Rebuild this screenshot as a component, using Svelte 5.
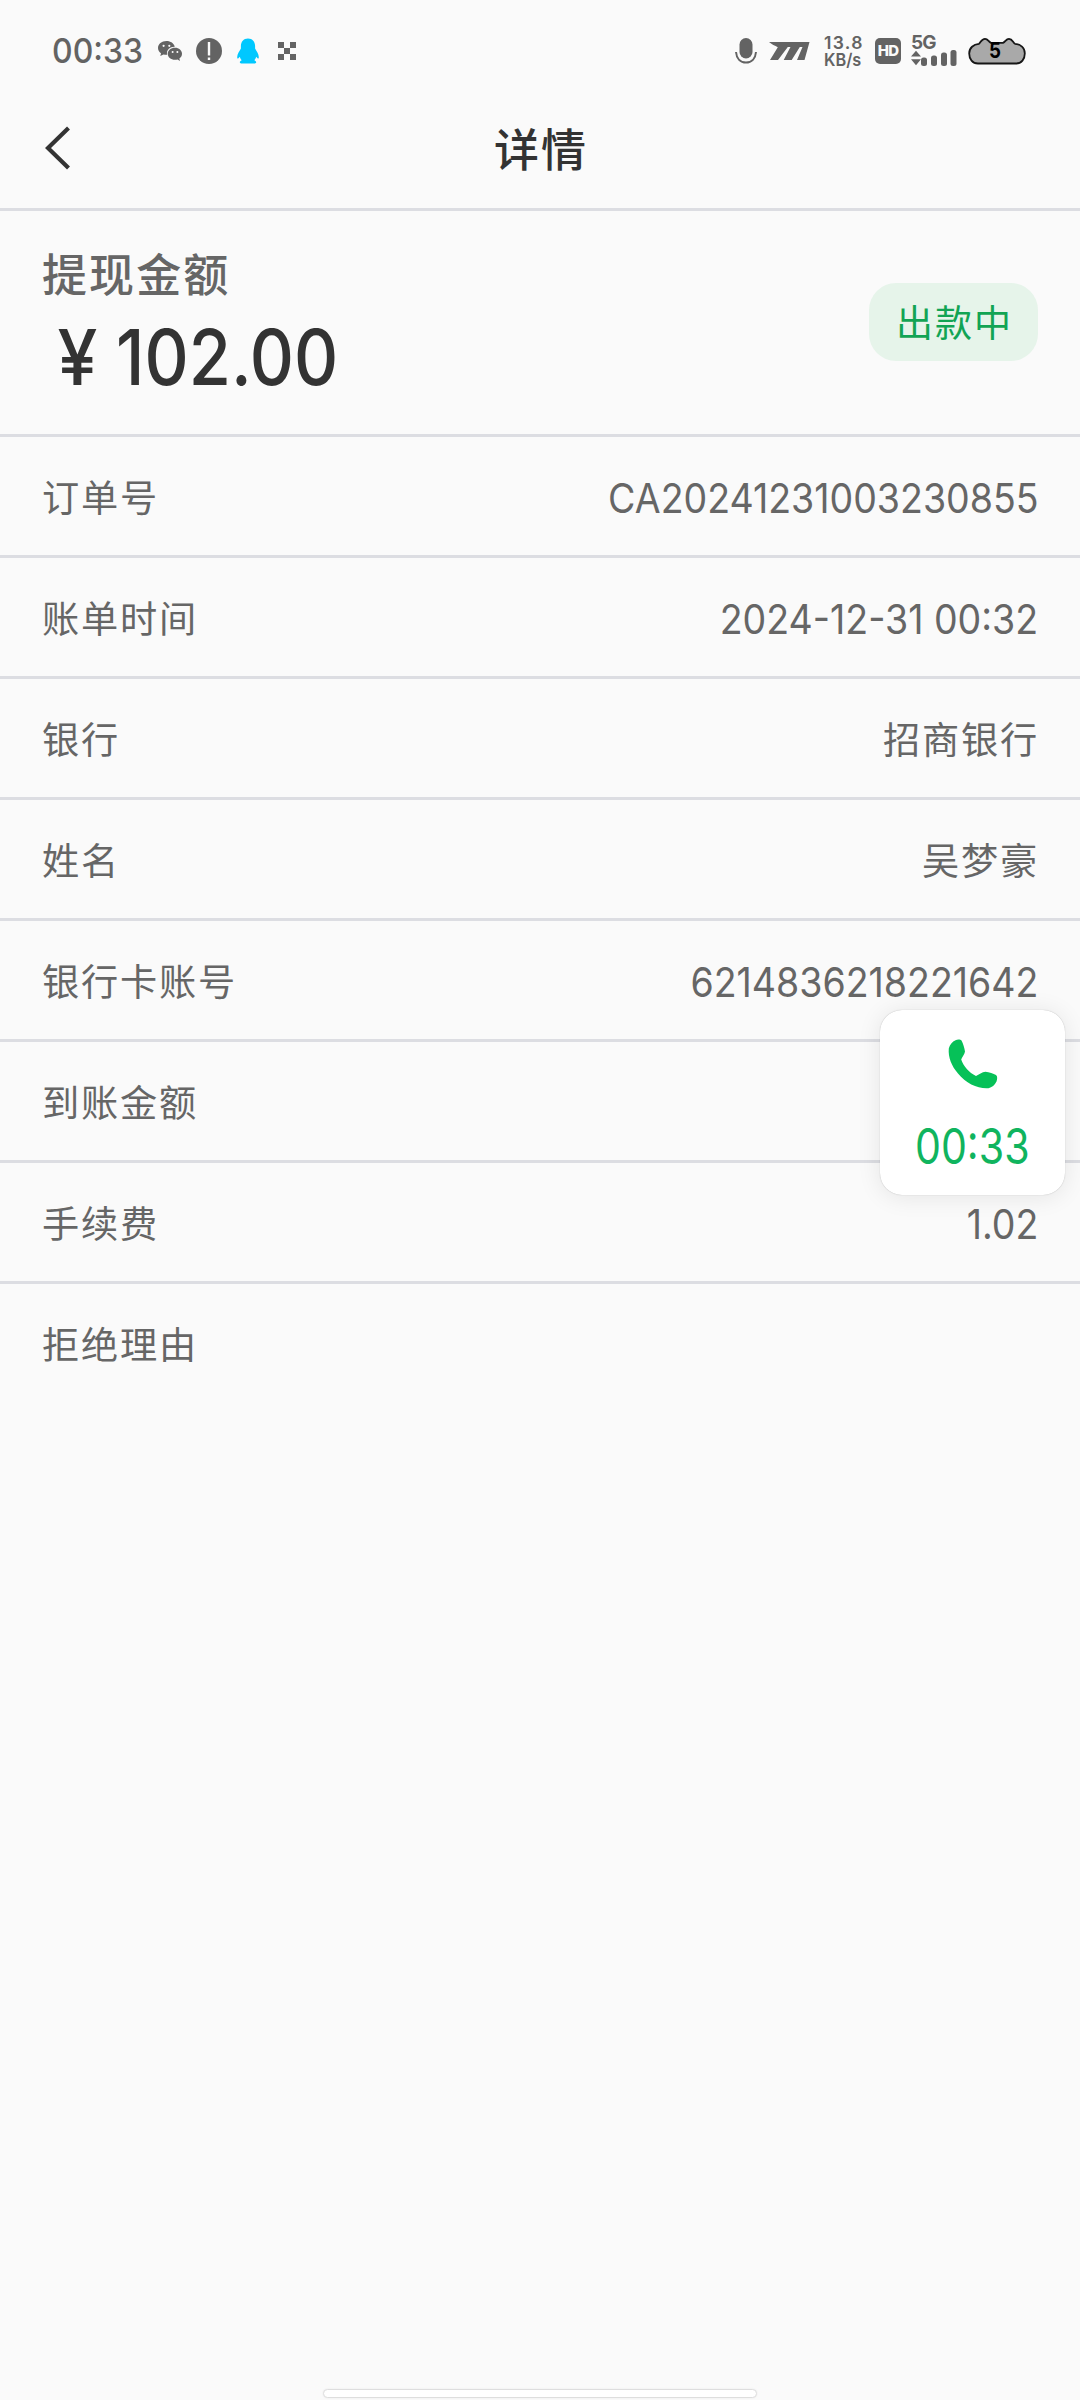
<script>
  const rows = [
    { label: '订单号', value: 'CA20241231003230855' },
    { label: '账单时间', value: '2024-12-31 00:32' },
    { label: '银行', value: '招商银行', cjk: true },
    { label: '姓名', value: '吴梦豪', cjk: true },
    { label: '银行卡账号', value: '6214836218221642' },
    { label: '到账金额', value: '' },
    { label: '手续费', value: '1.02' },
    { label: '拒绝理由', value: '' }
  ];
</script>

<div class="screen">
  <div class="status">
    <div class="left">
      <span class="clock">00:33</span>
      <svg class="wechat" width="26" height="22" viewBox="0 0 26 22">
        <path fill="#636363" d="M9.500 1C4.600 1 1 4.100 1 8c0 2.200 1.200 4 3 5.300L3.300 16l3.200-1.600c1 .3 2 .4 3 .4h.6C9 10 13 6.700 17.800 6.800 17 3.300 13.600 1 9.500 1z"/>
        <path fill="#636363" d="M18 7.700c-4.200 0-7.300 2.700-7.300 6.100s3.100 6 7.300 6c.9 0 1.700-.1 2.500-.4L23 21l-.6-2.400c1.600-1.200 2.600-2.900 2.600-4.800 0-3.400-3-6.100-7-6.100z"/>
        <g fill="#fafafa"><circle cx="6.600" cy="5.800" r="1.100"/><circle cx="12.300" cy="5.800" r="1.100"/><circle cx="15.600" cy="12" r="1"/><circle cx="20.400" cy="12" r="1"/></g>
      </svg>
      <svg class="alert" width="26" height="26" viewBox="0 0 26 26">
        <circle cx="13" cy="13" r="13" fill="#636363"/>
        <path fill="#fafafa" d="M11.800 4h2.400v13.500h-2.400zM11.800 19.500h2.400v2.500h-2.400z"/>
      </svg>
      <svg class="qq" width="24" height="26" viewBox="0 0 24 26">
        <path fill="#00c8ff" d="M12 .5C7.500.5 4.900 4 4.900 8v2.500C3.600 12.800 1.200 16 1.200 19c0 2 .8 2.300 2.600-.2.400 1.500 1 2.500 1.900 3.400-1.200.5-1.900 1.200-1.900 2.100 0 1 1 1.200 2.700 1.200h11c1.700 0 2.700-.2 2.700-1.200 0-.9-.7-1.600-1.900-2.100.9-.9 1.500-1.900 1.900-3.400 1.800 2.500 2.600 2.200 2.600.2 0-3-2.400-6.200-3.700-8.500V8C19.100 4 16.500.5 12 .5z"/>
      </svg>
      <svg class="dots" width="18" height="18" viewBox="0 0 18 18">
        <path fill="#636363" d="M0 0h6v6H0zM12 0h6v6h-6zM6 6h6v6H6zM0 12h6v6H0zM12 12h6v6h-6z"/>
      </svg>
    </div>
    <div class="right">
      <svg class="mic" width="22" height="26" viewBox="0 0 22 26">
        <rect x="4.500" y="0" width="13" height="20.500" rx="6.500" fill="#636363"/>
        <path d="M1 14c.5 6.500 4.500 10.500 10 10.500S20.500 20.500 21 14" fill="none" stroke="#636363" stroke-width="2"/>
      </svg>
      <svg class="brand" width="41" height="18" viewBox="0 0 41 18">
        <path fill="#636363" d="M0 0h40.500L35.500 18H28L33.500 5h-2.700L22.700 18h-8L21.500 5h-2.700L9 18H1L8.800 5.200C6 3.800 2.500 2.200 0 0z"/>
      </svg>
      <div class="speed"><span class="rate">13.8</span><span class="unit">KB/s</span></div>
      <div class="hd">HD</div>
      <div class="network">
        <span class="gen">5G</span>
        <svg width="46" height="16" viewBox="0 0 46 16">
          <path fill="#636363" d="M0 6.500 5 .8l5 5.700zM0 9.300h10L5 15.200z"/>
          <g fill="#636363"><rect x="10" y="7.500" width="6" height="8.500" rx="2.500"/><rect x="20" y="5.500" width="6" height="10.500" rx="2.500"/><rect x="30" y="2.500" width="6" height="13.500" rx="2.500"/><rect x="39.500" y="0" width="6" height="16" rx="2.500"/></g>
        </svg>
      </div>
      <div class="battery">
        <svg width="58" height="28" viewBox="0 0 58 28">
          <path fill="#a9a9a9" stroke="#161616" stroke-width="1.800" stroke-linejoin="round" d="M10 26.500C4.500 26.500 1.200 22 1.200 16.500 1.200 11 5.500 7.300 11 6.800c1.500-1 2.500-5 6-5 3 0 3.500 3 6 4h12c2.500-1 3-4 6-4 3.500 0 4 4 6 5 5.500.7 9.800 4 9.800 9.700 0 5.500-3.300 10-8.800 10z"/>
        </svg>
        <b>5</b>
      </div>
    </div>
  </div>

  <header>
    <svg class="back" width="26" height="44" viewBox="0 0 26 44">
      <path d="M23.500 2 3 22l20.500 20" fill="none" stroke="#333" stroke-width="4.200"/>
    </svg>
    <h1>详情</h1>
  </header>

  <section class="hero">
    <div>
      <div class="caption">提现金额</div>
      <div class="amount"><span class="yen">¥</span><span class="number">102.00</span></div>
    </div>
    <span class="badge">出款中</span>
  </section>

  <main>
    {#each rows as row}
      <div class="row">
        <span class="label">{row.label}</span>
        <span class={row.cjk ? 'label' : 'value'}>{row.value}</span>
      </div>
    {/each}
  </main>

  <div class="call">
    <svg width="50" height="50" viewBox="0 0 50 50">
      <path fill="#06c158" d="M7.500 1.200C9.500.2 12.300.2 13.500 1.500c1.700 3 2.800 7 3.500 11-.3 3-2.800 5.200-3.800 8C15.500 27.500 21 33.500 28 37c3-1.200 6-4 9.500-4.200 3.700.4 8 1.700 10.500 3.200 1.800 1.500 1.200 4.500.5 6.500-1.800 3.500-4.500 6-8 6.700C30 50 18 44.500 10 34.500 3.500 27 0 18 .8 9.500c1-4 3.500-6.800 6.700-8.300z"/>
    </svg>
    <span>00:33</span>
  </div>
  <div class="home"></div>
</div>

<style>
  :global(body) { margin: 0; background: #fafafa; }
  .screen {
    position: relative;
    width: 1080px;
    height: 2400px;
    overflow: hidden;
    background: #fafafa;
    color: #666;
    font-family: Inter, "Noto Sans CJK SC", sans-serif;
  }
  svg { display: block; flex: none; }
  .status {
    box-sizing: border-box;
    height: 94px;
    padding: 8px 54px 0 52px;
    display: flex;
    justify-content: space-between;
    color: #636363;
  }
  .left, .right { display: flex; align-items: center; height: 86px; }
  .clock {
    width: 105px;
    margin-top: -2px;
    font-size: 34px;
    font-weight: 500;
    white-space: nowrap;
    transform: scaleX(.94);
    transform-origin: left;
  }
  .alert { margin-left: 13px; }
  .qq { margin-left: 14px; }
  .dots { margin-left: 18px; }
  .brand { margin-left: 12px; }
  .speed {
    width: 40px;
    margin-left: 14px;
    display: flex;
    flex-direction: column;
    align-items: flex-start;
    font-size: 17.500px;
    line-height: 17.500px;
    font-weight: 600;
    white-space: nowrap;
  }
  .rate { letter-spacing: 1.300px; }
  .unit { transform: scaleX(.93); transform-origin: left; }
  .hd {
    width: 26px;
    height: 26px;
    margin-left: 11px;
    border-radius: 5px;
    background: #636363;
    color: #fafafa;
    font-size: 15px;
    line-height: 26px;
    font-weight: 800;
    letter-spacing: -0.8px;
    text-align: center;
  }
  .network { width: 46px; height: 30px; margin-left: 10px; display: flex; flex-direction: column; justify-content: space-between; }
  .gen { font-size: 19px; line-height: 14px; font-weight: 700; letter-spacing: -1px; }
  .battery { position: relative; width: 58px; margin-left: 11px; }
  .battery b { position: absolute; left: 21px; top: 1px; color: #000; font-size: 22px; line-height: 24px; transform: scaleX(.85); transform-origin: left; }

  header {
    height: 114px;
    border-bottom: 3px solid #dcdde2;
    display: grid;
    grid-template-columns: 1fr auto 1fr;
    align-items: center;
  }
  .back { margin-left: 45px; margin-top: -6px; }
  h1 { margin: 0; padding-left: 2px; color: #333; font-size: 45px; line-height: 60px; font-weight: 500; letter-spacing: 2px; }

  .hero {
    box-sizing: border-box;
    height: 226px;
    padding: 35px 42px 0 42px;
    border-bottom: 3px solid #dcdde2;
    display: flex;
    justify-content: space-between;
  }
  .caption { font-size: 45px; line-height: 60px; font-weight: 500; letter-spacing: 2.100px; }
  .amount { display: flex; color: #333; font-size: 77px; line-height: 90px; font-weight: 500; margin-top: 6px; }
  .yen { width: 74px; padding-right: 0; text-align: center; transform: scaleX(.93); transform-origin: 20% 50%; }
  .number { transform: scaleX(.89); transform-origin: left; }
  .badge {
    box-sizing: border-box;
    width: 169px;
    height: 78px;
    margin-top: 37px;
    padding-left: 2px;
    border-radius: 27px;
    background: #e6f4ea;
    color: #12a454;
    font-size: 37px;
    line-height: 82px;
    letter-spacing: 2px;
    text-align: center;
  }
  .row {
    height: 118px;
    padding: 0 41px 0 42px;
    border-bottom: 3px solid #dcdde2;
    display: flex;
    justify-content: space-between;
    align-items: center;
  }
  .row:last-child { border: 0; }
  .label { font-size: 37.200px; letter-spacing: 1.800px; }
  .value { padding: 3px 1px 0 0; font-size: 41px; transform: scaleX(.915); transform-origin: right; }
  .call {
    position: absolute;
    left: 880px;
    top: 1010px;
    box-sizing: border-box;
    width: 185px;
    height: 185px;
    padding-top: 29px;
    border-radius: 22px;
    background: #fff;
    box-shadow: 0 2px 24px rgba(0, 0, 0, .09), 0 0 1px rgba(0, 0, 0, .3);
    display: flex;
    flex-direction: column;
    align-items: center;
    color: #10b45e;
  }
  .call span { margin-top: 28px; font-size: 49px; line-height: 60px; transform: scaleX(.84); }
  .home {
    position: absolute;
    left: 323px;
    bottom: 2px;
    box-sizing: border-box;
    width: 434px;
    height: 9px;
    border: 1px solid #dedede;
    border-radius: 5px;
    background: #fff;
    box-shadow: 0 0 2px rgba(0, 0, 0, .08);
  }
</style>
